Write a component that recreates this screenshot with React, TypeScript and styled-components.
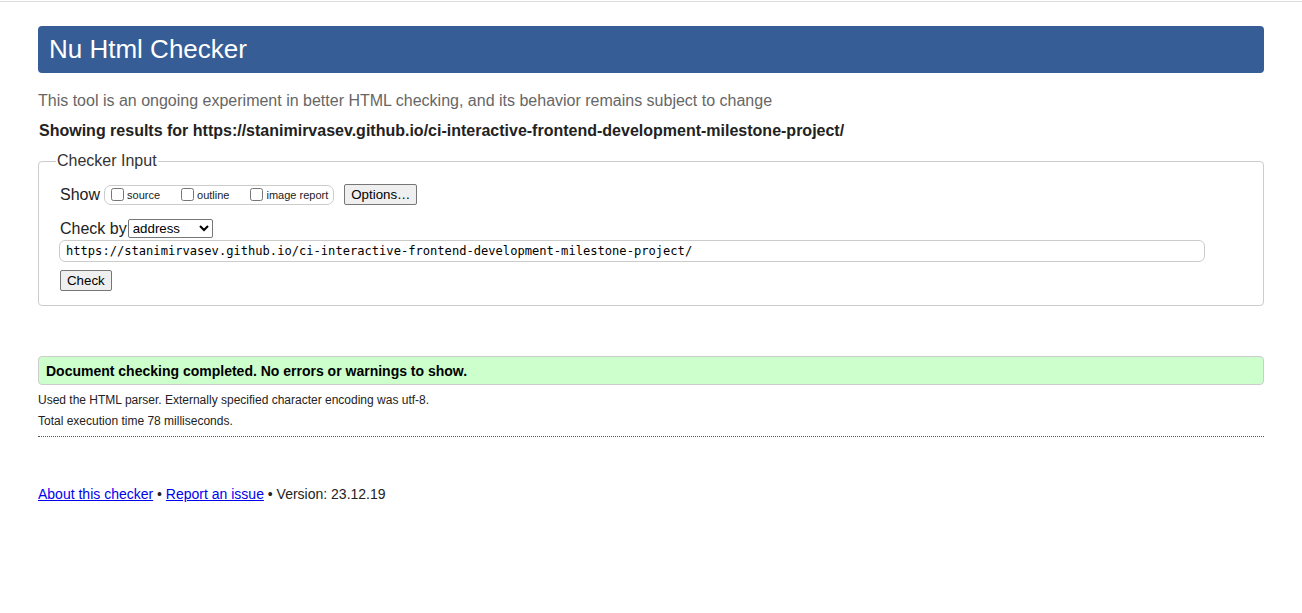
import React from "react";
import styled, { createGlobalStyle } from "styled-components";

const Global = createGlobalStyle`
  html, body { margin: 0; padding: 0; background: #fff; }
  body { font-family: Arial, "Liberation Sans", sans-serif; color: #222; }
`;

const Page = styled.div`
  border-top: 1px solid #dcdcdc;
  margin-top: 1px;
  padding: 24px 38px 0 38px;
`;

const Header = styled.h1`
  margin: 0;
  height: 47px;
  background: #365d95;
  color: #fff;
  border-radius: 4px;
  font-size: 26px;
  font-weight: normal;
  line-height: 47px;
  padding: 0 11px;
`;

const Tagline = styled.p`
  margin: 18px 0 0 0;
  color: #666;
  font-size: 16px;
  line-height: 20px;
`;

const Results = styled.p`
  margin: 10px 0 0 1px;
  font-size: 16px;
  font-weight: bold;
  line-height: 20px;
  color: #222;
`;

const Fieldset = styled.fieldset`
  margin: 11px 0 0 0;
  border: 1px solid #ccc;
  border-radius: 4px;
  padding: 14px 20px 14px 21px;
`;

const Legend = styled.legend`
  font-size: 16px;
  padding: 0 1px;
  margin-left: -4px;
  color: #333;
`;

const Row = styled.div<{ after: number }>`
  display: flex;
  align-items: center;
  margin-bottom: ${(p) => p.after}px;
`;

const Label = styled.span<{ space: number }>`
  font-size: 16px;
  color: #222;
  margin-right: ${(p) => p.space}px;
`;

const CheckGroup = styled.span`
  display: inline-flex;
  align-items: center;
  border: 1px solid #ccc;
  border-radius: 7px;
  height: 18px;
  padding: 0 5px 0 5px;
  margin-right: 10px;
`;

const CheckItem = styled.label<{ gap?: number }>`
  display: inline-flex;
  align-items: center;
  font-size: 11px;
  color: #222;
  margin-right: ${(p) => p.gap ?? 0}px;
  input {
    margin: 0 3px 0 1px;
    width: 13px;
    height: 13px;
  }
`;

const Button = styled.button`
  font-family: Arial, "Liberation Sans", sans-serif;
  font-size: 13.3px;
  color: #000;
  background: #efefef;
  border: 1px solid #767676;
  border-radius: 2px;
  padding: 1px 6px;
  height: 21px;
`;

const Select = styled.select`
  font-family: Arial, "Liberation Sans", sans-serif;
  font-size: 13.3px;
  color: #000;
  border: 1px solid #767676;
  border-radius: 2px;
  width: 85px;
  height: 19px;
  padding: 0;
  background: #fff;
`;

const UrlInput = styled.input`
  display: block;
  width: 1146px;
  box-sizing: border-box;
  height: 22px;
  border: 1px solid #ccc;
  border-radius: 6px;
  font-family: "DejaVu Sans Mono", "Liberation Mono", monospace;
  font-size: 12.1px;
  color: #000;
  padding: 0 6px;
  margin: 1px 0 8px -1px;
`;

const Success = styled.div`
  margin-top: 50px;
  height: 29px;
  box-sizing: border-box;
  border: 1px solid #ccc;
  border-radius: 4px;
  background: #ccffcc;
  padding: 0 7px;
  font-size: 14px;
  font-weight: bold;
  line-height: 28px;
  color: #000;
`;

const Small = styled.p<{ top: number }>`
  margin: ${(p) => p.top}px 0 0 0;
  font-size: 12px;
  line-height: 14px;
  color: #222;
`;

const Divider = styled.hr`
  margin: 8px 0 0 0;
  border: 0;
  border-top: 1px dotted #555;
`;

const Footer = styled.p`
  margin: 49px 0 0 0;
  font-size: 14px;
  line-height: 16px;
  color: #222;
  a { color: #00e; }
`;

export default function App() {
  return (
    <>
      <Global />
      <Page>
        <Header>Nu Html Checker</Header>
        <Tagline>
          This tool is an ongoing experiment in better HTML checking, and its behavior remains subject to change
        </Tagline>
        <Results>
          Showing results for https://stanimirvasev.github.io/ci-interactive-frontend-development-milestone-project/
        </Results>
        <Fieldset>
          <Legend>Checker Input</Legend>
          <Row after={14}>
            <Label space={4}>Show</Label>
            <CheckGroup>
              <CheckItem gap={20}>
                <input type="checkbox" />source
              </CheckItem>
              <CheckItem gap={20}>
                <input type="checkbox" />outline
              </CheckItem>
              <CheckItem>
                <input type="checkbox" />image report
              </CheckItem>
            </CheckGroup>
            <Button>Options…</Button>
          </Row>
          <Row after={2}>
            <Label space={1}>Check by</Label>
            <Select defaultValue="address">
              <option value="address">address</option>
              <option value="file">file upload</option>
              <option value="text">text input</option>
            </Select>
          </Row>
          <UrlInput
            defaultValue="https://stanimirvasev.github.io/ci-interactive-frontend-development-milestone-project/"
          />
          <Button>Check</Button>
        </Fieldset>
        <Success>Document checking completed. No errors or warnings to show.</Success>
        <Small top={8}>Used the HTML parser. Externally specified character encoding was utf-8.</Small>
        <Small top={7}>Total execution time 78 milliseconds.</Small>
        <Divider />
        <Footer>
          <a href="#">About this checker</a> • <a href="#">Report an issue</a> • Version: 23.12.19
        </Footer>
      </Page>
    </>
  );
}
